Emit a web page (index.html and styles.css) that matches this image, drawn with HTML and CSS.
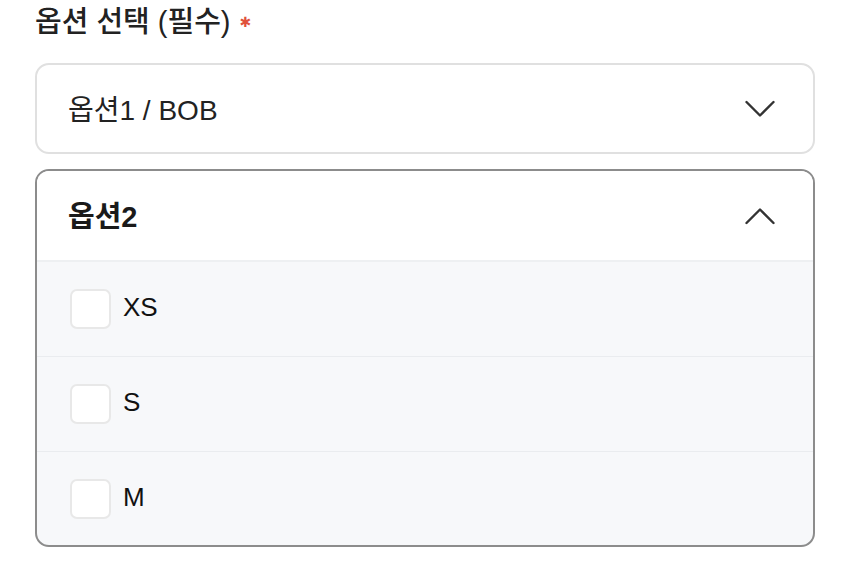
FILE: index.html
```html
<!DOCTYPE html>
<html lang="ko">
<head>
<meta charset="utf-8">
<link rel="stylesheet" href="styles.css">
</head>
<body>
<div class="page">
  <div class="label">옵션 선택 (필수) <span class="req">✱</span></div>
  <div class="select">
    <span class="select-text">옵션1 / BOB</span>
    <svg class="chev" width="32" height="20" viewBox="0 0 32 20"><polyline points="2.5,3 16,16.5 29.5,3" fill="none" stroke="#333" stroke-width="2.4" stroke-linecap="round" stroke-linejoin="round"/></svg>
  </div>
  <div class="panel">
    <div class="panel-head">
      <span class="panel-title">옵션2</span>
      <svg class="chev" width="32" height="20" viewBox="0 0 32 20"><polyline points="2.5,17 16,3.5 29.5,17" fill="none" stroke="#333" stroke-width="2.4" stroke-linecap="round" stroke-linejoin="round"/></svg>
    </div>
    <div class="row"><span class="box"></span><span class="opt">XS</span></div>
    <div class="row"><span class="box"></span><span class="opt">S</span></div>
    <div class="row"><span class="box"></span><span class="opt">M</span></div>
  </div>
</div>
</body>
</html>
```
FILE: styles.css
```css
html, body {
  margin: 0;
  padding: 0;
  background: #fff;
}
body {
  font-family: "Liberation Sans", "Noto Sans CJK KR", sans-serif;
  color: #1a1a1a;
}
.page {
  width: 780px;
  padding: 2px 0 0 35px;
}
.label {
  font-size: 29px;
  font-weight: 500;
  line-height: 40px;
  height: 40px;
  margin-bottom: 21px;
  color: #222;
}
.req {
  font-family: "DejaVu Sans", sans-serif;
  color: #e0523c;
  font-size: 14px;
  vertical-align: 5px;
  margin-left: 1px;
}
.select {
  box-sizing: border-box;
  height: 91px;
  border: 2px solid #e0e0e0;
  border-radius: 14px;
  display: flex;
  align-items: center;
  justify-content: space-between;
  padding: 0 37px 0 31px;
  margin-bottom: 15px;
}
.select-text {
  font-size: 28px;
  color: #222;
  margin-top: -2px;
}
.chev { display: block; }
.panel {
  box-sizing: border-box;
  border: 2px solid #8c8c8c;
  border-radius: 14px;
  overflow: hidden;
  background: #f7f8fa;
}
.panel-head {
  height: 89px;
  background: #fff;
  display: flex;
  align-items: center;
  justify-content: space-between;
  padding: 0 37px 0 31px;
  border-bottom: 2px solid #eef0f2;
}
.panel-title {
  font-size: 29px;
  font-weight: 700;
  color: #1a1a1a;
  margin-top: -4px;
}
.row {
  height: 94px;
  display: flex;
  align-items: center;
  padding-left: 33px;
  gap: 12px;
  border-bottom: 1px solid #eaecef;
}
.row:last-child { border-bottom: 0; height: 93px; }
.box {
  box-sizing: border-box;
  width: 41px;
  height: 40px;
  border: 2px solid #e8e8e8;
  border-radius: 7px;
  background: #fff;
}
.opt {
  font-size: 26px;
  color: #111;
  margin-top: -3px;
}
```
